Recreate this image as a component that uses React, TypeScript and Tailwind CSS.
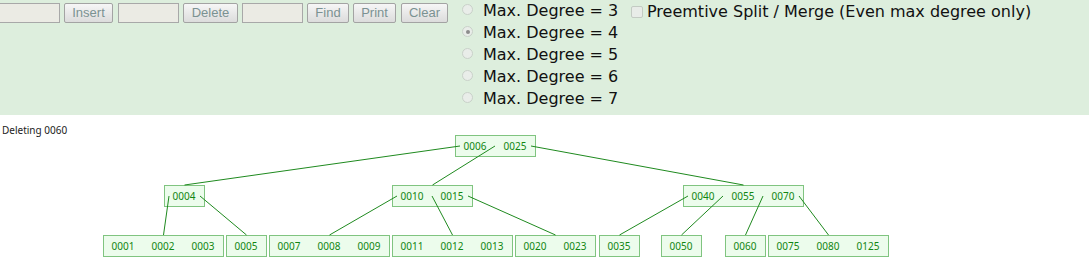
type TreeNode = { x: number; y: number; keys: string[] };

const KEY_W = 40;
const NODE_H = 21;

const root: TreeNode = { x: 455, y: 135, keys: ["0006", "0025"] };

const inner: TreeNode[] = [
  { x: 164, y: 185, keys: ["0004"] },
  { x: 392, y: 185, keys: ["0010", "0015"] },
  { x: 683, y: 185, keys: ["0040", "0055", "0070"] },
];

const leaves: TreeNode[] = [
  { x: 103, y: 235, keys: ["0001", "0002", "0003"] },
  { x: 226, y: 235, keys: ["0005"] },
  { x: 269, y: 235, keys: ["0007", "0008", "0009"] },
  { x: 392, y: 235, keys: ["0011", "0012", "0013"] },
  { x: 515, y: 235, keys: ["0020", "0023"] },
  { x: 599, y: 235, keys: ["0035"] },
  { x: 661, y: 235, keys: ["0050"] },
  { x: 725, y: 235, keys: ["0060"] },
  { x: 768, y: 235, keys: ["0075", "0080", "0125"] },
];

const edges: [TreeNode, number, TreeNode][] = [
  [root, 0, inner[0]],
  [root, 1, inner[1]],
  [root, 2, inner[2]],
  [inner[0], 0, leaves[0]],
  [inner[0], 1, leaves[1]],
  [inner[1], 0, leaves[2]],
  [inner[1], 1, leaves[3]],
  [inner[1], 2, leaves[4]],
  [inner[2], 0, leaves[5]],
  [inner[2], 1, leaves[6]],
  [inner[2], 2, leaves[7]],
  [inner[2], 3, leaves[8]],
];

const width = (n: TreeNode) => n.keys.length * KEY_W + 1;

function Edge({ from, i, to }: { from: TreeNode; i: number; to: TreeNode }) {
  const w = width(from);
  const x1 = Math.min(Math.max(from.x + KEY_W * i, from.x + 5), from.x + w - 5);
  const y1 = from.y + 11;
  const x2 = to.x + width(to) / 2;
  return <line x1={x1} y1={y1} x2={x2} y2={to.y} stroke="#1f8a1f" strokeWidth={1} />;
}

function Box({ n }: { n: TreeNode }) {
  return (
    <rect
      x={n.x + 0.5}
      y={n.y + 0.5}
      width={width(n) - 1}
      height={NODE_H}
      fill="#ecfcec"
      stroke="#80c480"
      strokeWidth={1}
    />
  );
}

function Keys({ n }: { n: TreeNode }) {
  return (
    <>
      {n.keys.map((k, i) => (
        <text key={k} x={n.x + 20 + KEY_W * i} y={n.y + 14.5} textAnchor="middle" fill="#128612">
          {k}
        </text>
      ))}
    </>
  );
}

function Radio({ label, checked }: { label: string; checked?: boolean }) {
  return (
    <div className="flex items-start h-[22px]">
      <span className="mt-[4px] w-[11px] h-[11px] rounded-full border border-[#c9d1c9] bg-[#e9ede9] flex items-center justify-center">
        {checked ? <span className="w-[4px] h-[4px] rounded-full bg-[#8c8c8c]" /> : null}
      </span>
      <span className="ml-[10px] leading-[22px]">{label}</span>
    </div>
  );
}

const btn =
  "h-[20px] border border-[#a3a3a3] rounded-[2px] bg-gradient-to-b from-[#f6f6f6] to-[#dcdcdc] text-[13px] text-[#7b9292] leading-[18px] text-center";
const field = "h-[20px] w-[61px] border border-[#a8a8a8] bg-[#ebebe4]";

export default function App() {
  const nodes = [root, ...inner, ...leaves];
  return (
    <div className="w-[1089px] h-[273px] bg-white overflow-hidden" style={{ fontFamily: '"DejaVu Sans", sans-serif' }}>
      <div className="flex items-start h-[115px] bg-[#ddeedd]">
        <div className="flex mt-[3px] ml-[-2px]" style={{ fontFamily: '"Liberation Sans", Arial, sans-serif' }}>
          <div className={`${field} w-[62px]`} />
          <div className={`${btn} w-[49px] ml-[4px]`}>Insert</div>
          <div className={`${field} ml-[5px]`} />
          <div className={`${btn} w-[55px] ml-[4px]`}>Delete</div>
          <div className={`${field} ml-[4px]`} />
          <div className={`${btn} w-[42px] ml-[4px]`}>Find</div>
          <div className={`${btn} w-[43px] ml-[4px]`}>Print</div>
          <div className={`${btn} w-[47px] ml-[5px]`}>Clear</div>
        </div>
        <div className="ml-[14px] w-[169px] text-[16px] text-[#111]">
          <Radio label="Max. Degree = 3" />
          <Radio label="Max. Degree = 4" checked />
          <Radio label="Max. Degree = 5" />
          <Radio label="Max. Degree = 6" />
          <Radio label="Max. Degree = 7" />
        </div>
        <div className="flex items-start text-[16px] text-[#111]">
          <span className="mt-[6px] w-[12px] h-[12px] rounded-[2px] border border-[#c3cbc3] bg-[#e8ece8]" />
          <span className="ml-[4px] mt-[1px] leading-[22px]">Preemtive Split / Merge (Even max degree only)</span>
        </div>
      </div>
      <div className="relative h-[158px]">
        <svg
          className="absolute inset-0"
          width={1089}
          height={158}
          style={{ fontFamily: '"Noto Sans", sans-serif', fontSize: 10 }}
        >
          <g transform="translate(0,-115)">
            {nodes.map((n) => (
              <Box key={n.keys.join()} n={n} />
            ))}
            {edges.map(([f, i, t], idx) => (
              <Edge key={idx} from={f} i={i} to={t} />
            ))}
            {nodes.map((n) => (
              <Keys key={n.keys.join()} n={n} />
            ))}
          </g>
        </svg>
        <div
          className="relative pt-[8px] pl-[2px] text-[10px] leading-[14px] text-[#222]"
          style={{ fontFamily: '"Noto Sans", sans-serif' }}
        >
          Deleting 0060
        </div>
      </div>
    </div>
  );
}
